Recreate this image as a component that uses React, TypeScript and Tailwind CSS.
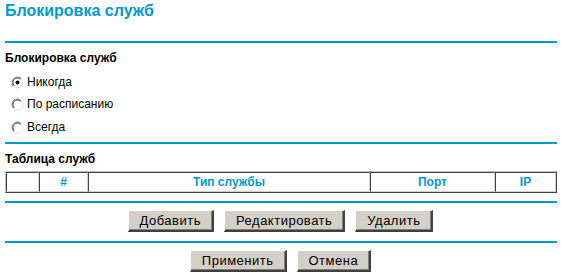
import React from "react";

function Radio({ checked }: { checked?: boolean }) {
  return (
    <svg width="13" height="13" viewBox="0 0 13 13" className="shrink-0">
      <circle cx="6.5" cy="6.5" r="5.5" fill="#ffffff" />
      <path d="M2.6 10.4 A5.5 5.5 0 0 1 10.4 2.6" fill="none" stroke="#808080" strokeWidth="1" />
      <path d="M10.4 2.6 A5.5 5.5 0 0 1 2.6 10.4" fill="none" stroke="#e0e0e0" strokeWidth="1" />
      <path d="M3.3 9.7 A4.5 4.5 0 0 1 9.7 3.3" fill="none" stroke="#404040" strokeWidth="1" />
      {checked && <circle cx="6.5" cy="6.5" r="2" fill="#000" />}
    </svg>
  );
}

function Btn({ children }: { children: React.ReactNode }) {
  return (
    <button className="h-[22px] px-[11px] bg-[#d4d0c8] text-[13px] tracking-[0.5px] text-black leading-none border-t border-l border-t-white border-l-white border-b-2 border-r-2 border-b-[#404040] border-r-[#404040] shadow-[inset_-1px_-1px_0_#808080]">
      {children}
    </button>
  );
}

function Line() {
  return <div className="ml-[5px] w-[552px] h-[2px] bg-[#0099cc]" />;
}

export default function App() {
  return (
    <div className="w-[561px] h-[278px] bg-white overflow-hidden" style={{ fontFamily: '"Liberation Sans", Arial, sans-serif' }}>
      <div className="pl-[5px] pt-[1px] h-[41px] text-[16px] font-bold text-[#0099cc] leading-[19px]">Блокировка служб</div>
      <Line />
      <div className="pl-[5px] pt-[8px] text-[12px] font-bold text-black leading-[14px]">Блокировка служб</div>
      <div className="flex flex-col pl-[11px] text-[12px] text-black leading-[14px]">
        <label className="flex items-center gap-[3px] mt-[10px]"><Radio checked />Никогда</label>
        <label className="flex items-center gap-[3px] mt-[8px]"><Radio />По расписанию</label>
        <label className="flex items-center gap-[3px] mt-[9px]"><Radio />Всегда</label>
      </div>
      <div className="mt-[8px]"><Line /></div>
      <div className="pl-[5px] pt-[8px] text-[12px] font-bold text-black leading-[14px]">Таблица служб</div>
      <div className="ml-[5px] mt-[5px] w-[552px] border border-t-[#c0c0c0] border-l-[#c0c0c0] border-b-[#404040] border-r-[#404040]">
        <div className="flex h-[20px] text-[12px] font-bold text-[#0099cc]">
          {[
            { w: "w-[33px]", t: "" },
            { w: "w-[49px]", t: "#" },
            { w: "w-[282px]", t: "Тип службы" },
            { w: "w-[125px]", t: "Порт" },
            { w: "w-[61px]", t: "IP" },
          ].map((c, i) => (
            <div key={i} className={`${c.w} h-full flex items-center justify-center border border-t-[#404040] border-l-[#404040] border-b-[#d0d0d0] border-r-[#d0d0d0]`}>
              {c.t}
            </div>
          ))}
        </div>
      </div>
      <div className="mt-[8px]"><Line /></div>
      <div className="flex justify-center gap-[10px] mt-[7px]">
        <Btn>Добавить</Btn>
        <Btn>Редактировать</Btn>
        <Btn>Удалить</Btn>
      </div>
      <div className="mt-[9px]"><Line /></div>
      <div className="flex justify-center gap-[10px] mt-[7px]">
        <Btn>Применить</Btn>
        <Btn>Отмена</Btn>
      </div>
    </div>
  );
}
